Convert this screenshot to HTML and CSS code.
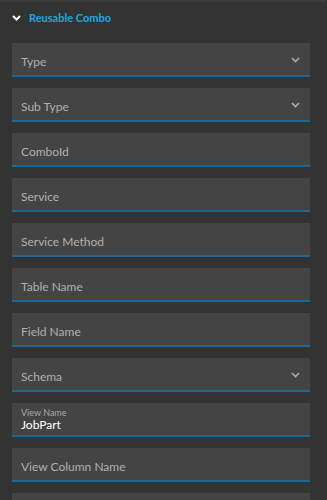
FILE: index.html
```html
<!DOCTYPE html>
<html lang="en">
<head>
    <meta charset="UTF-8">
    <meta name="viewport" content="width=device-width, initial-scale=1.0">
    <title>Reusable Combo</title>
    <link rel="stylesheet" href="styles.css">
</head>
<body>
    <div class="panel">
        <div class="section-header">
            <svg class="toggle" width="9" height="6" viewBox="0 0 9 6"><path d="M1 1 L4.5 4.5 L8 1" fill="none" stroke="#fff" stroke-width="2"/></svg>
            <span class="section-title">Reusable Combo</span>
        </div>

        <div class="fields">
            <div class="field select"><span class="label">Type</span><svg class="caret" width="9" height="6" viewBox="0 0 9 6"><path d="M1 1 L4.5 4.5 L8 1" fill="none" stroke="#a9a9a9" stroke-width="1.6"/></svg></div>
            <div class="field select"><span class="label">Sub Type</span><svg class="caret" width="9" height="6" viewBox="0 0 9 6"><path d="M1 1 L4.5 4.5 L8 1" fill="none" stroke="#a9a9a9" stroke-width="1.6"/></svg></div>
            <div class="field"><span class="label">ComboId</span></div>
            <div class="field"><span class="label">Service</span></div>
            <div class="field"><span class="label">Service Method</span></div>
            <div class="field"><span class="label">Table Name</span></div>
            <div class="field"><span class="label">Field Name</span></div>
            <div class="field select"><span class="label">Schema</span><svg class="caret" width="9" height="6" viewBox="0 0 9 6"><path d="M1 1 L4.5 4.5 L8 1" fill="none" stroke="#a9a9a9" stroke-width="1.6"/></svg></div>
            <div class="field filled">
                <span class="small-label">View Name</span>
                <span class="value">JobPart</span>
            </div>
            <div class="field"><span class="label">View Column Name</span></div>
            <div class="field"><span class="label"></span></div>
        </div>
    </div>
</body>
</html>
```

FILE: styles.css
```css
body {
    margin: 0;
    background-color: #333333;
    font-family: Lato, "Noto Sans", sans-serif;
}
.panel {
    border-top: 2px solid #3d3d3d;
    margin-right: 1px;
    height: 498px;
    overflow: hidden;
}
.section-header {
    display: flex;
    align-items: center;
    height: 30px;
    padding-left: 12px;
    gap: 8px;
}
.toggle {
    margin-top: 1px;
}
.section-title {
    color: #1fa6e0;
    font-size: 11px;
    font-weight: bold;
}
.fields {
    display: flex;
    flex-direction: column;
    gap: 11px;
    padding: 11px 16px 0 12px;
}
.field {
    display: flex;
    flex-shrink: 0;
    align-items: center;
    justify-content: space-between;
    height: 32px;
    padding: 0 10px 0 9px;
    background-color: #444444;
    border-bottom: 2px solid #1e6694;
}
.label {
    color: #b0b0b0;
    font-size: 12px;
    margin-top: 4px;
}
.caret {
    margin-top: 2px;
}
.filled {
    flex-direction: column;
    align-items: flex-start;
    justify-content: center;
    gap: 0;
}
.small-label {
    color: #a8a8a8;
    font-size: 9px;
    line-height: 10px;
    margin-top: 2px;
}
.value {
    color: #ffffff;
    font-size: 12px;
    line-height: 14px;
}
```
